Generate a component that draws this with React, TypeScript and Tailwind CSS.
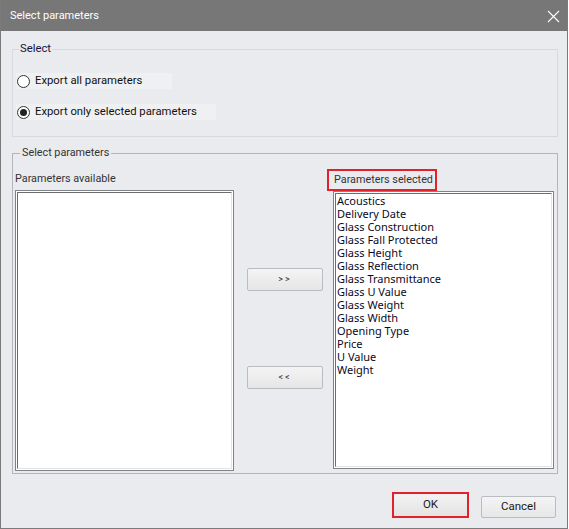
import React, { useState } from "react";

const SELECTED = [
  "Acoustics",
  "Delivery Date",
  "Glass Construction",
  "Glass Fall Protected",
  "Glass Height",
  "Glass Reflection",
  "Glass Transmittance",
  "Glass U Value",
  "Glass Weight",
  "Glass Width",
  "Opening Type",
  "Price",
  "U Value",
  "Weight",
];

const font = { fontFamily: 'Roboto, "Noto Sans", sans-serif' };
const listFont = { fontFamily: '"Noto Sans", "Open Sans", sans-serif' };

const Radio: React.FC<{ checked: boolean; label: string; onClick: () => void; width: string }> = ({
  checked,
  label,
  onClick,
  width,
}) => (
  <div
    onClick={onClick}
    className={`flex items-center h-[16px] bg-[#eff0f2] pl-[1px] gap-[5px] cursor-default whitespace-nowrap ${width}`}
  >
    <span className="w-[13px] h-[13px] shrink-0 rounded-full border border-[#333] bg-white flex items-center justify-center">
      {checked && <span className="w-[7px] h-[7px] rounded-full bg-[#222]" />}
    </span>
    <span className="text-[11.3px] leading-[16px] text-[#111]">{label}</span>
  </div>
);

const ListBox: React.FC<{ items: string[]; className: string }> = ({ items, className }) => (
  <div className={`border border-[#7f8287] bg-white p-[1px] ${className}`}>
    <div
      style={listFont}
      className="w-full h-full border-t border-l border-[#6d6d6d] border-r border-b border-r-[#e3e3e3] border-b-[#e3e3e3] pl-[1px]"
    >
      {items.map((it) => (
        <div key={it} className="text-[11px] leading-[13px] text-[#0a0a1e] whitespace-nowrap">
          {it}
        </div>
      ))}
    </div>
  </div>
);

const SmallButton: React.FC<{ label: string }> = ({ label }) => (
  <button className="w-[76px] h-[23px] rounded-[2px] border border-[#b9bcc0] bg-gradient-to-b from-[#f4f4f4] to-[#e6e6e6] text-[9px] tracking-[2px] text-[#333] flex items-center justify-center">
    {label}
  </button>
);

export default function App() {
  const [mode, setMode] = useState<"all" | "selected">("selected");

  return (
    <div style={font} className="w-[568px] h-[529px] flex flex-col border-l border-r border-b border-[#7b7b7b] bg-[#e9ebef]">
      <div className="h-[31px] shrink-0 bg-[#777777] flex items-center justify-between pl-[9px] pr-[7px] pt-[1px] text-white">
        <span className="text-[11px]">Select parameters</span>
        <svg width="13" height="13" viewBox="0 0 13 13" fill="none" stroke="white" strokeWidth="1.1">
          <path d="M1 1 L12 12 M12 1 L1 12" />
        </svg>
      </div>

      <div className="flex-1 flex flex-col pl-[11px] pr-[9px]">
        <fieldset className="mt-[10px] h-[96px] border border-[#d6d9dd]">
          <legend className="ml-[6px] px-[1px] text-[11.3px] leading-[16px] text-[#14143c]">Select</legend>
          <div className="flex flex-col pl-[3px] pt-[16px] gap-[15px]">
            <Radio checked={mode === "all"} label="Export all parameters" onClick={() => setMode("all")} width="w-[156px]" />
            <Radio
              checked={mode === "selected"}
              label="Export only selected parameters"
              onClick={() => setMode("selected")}
              width="w-[200px]"
            />
          </div>
        </fieldset>

        <fieldset className="mt-[8px] h-[329px] border border-[#b2b5b9]">
          <legend className="ml-[7px] px-[2px] text-[10.8px] leading-[16px] text-[#333]">Select parameters</legend>
          <div className="flex pl-[2px]">
            <div className="flex flex-col w-[219px] pt-[10px]">
              <div className="text-[10.8px] leading-[16px] text-[#333] whitespace-nowrap">Parameters available</div>
              <ListBox items={[]} className="mt-[3px] h-[281px]" />
            </div>

            <div className="flex flex-col ml-[13px] pt-[107px] gap-[75px]">
              <SmallButton label=">>" />
              <SmallButton label="<<" />
            </div>

            <div className="flex flex-col ml-[10px] w-[221px] pt-[8px]">
              <div className="-ml-[6px] w-[110px] h-[22px] border-2 border-[#e3212b] flex items-center pl-[5px] whitespace-nowrap">
                <span className="text-[10.8px] leading-[16px] text-[#333]">Parameters selected</span>
              </div>
              <ListBox items={SELECTED} className="h-[278px]" />
            </div>
          </div>
        </fieldset>

        <div className="flex justify-end items-center mt-[18px] mr-[2px] gap-[12px]">
          <button className="w-[77px] h-[26px] border-2 border-[#e3212b] bg-gradient-to-b from-[#f3f3f3] to-[#e3e3e3] text-[11.5px] text-[#1a1a1a]">
            OK
          </button>
          <button className="w-[75px] h-[22px] mt-[3px] rounded-[2px] border border-[#b9bcc0] bg-gradient-to-b from-[#f4f4f4] to-[#e7e7e7] text-[11.5px] text-[#1a1a1a]">
            Cancel
          </button>
        </div>
      </div>
    </div>
  );
}
